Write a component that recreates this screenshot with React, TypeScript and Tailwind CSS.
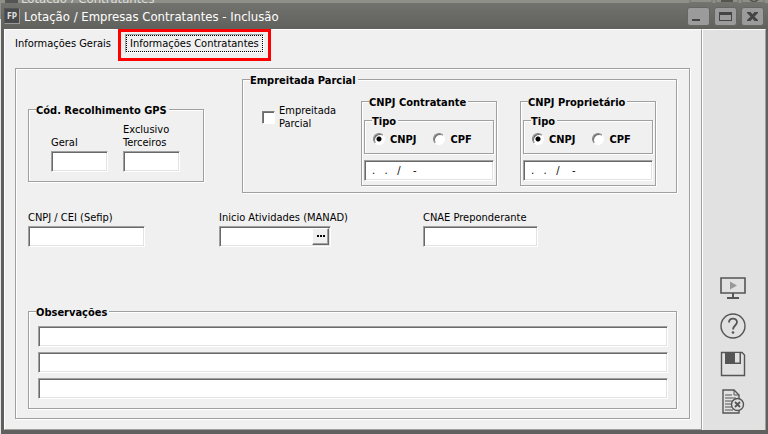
import type { ReactNode } from 'react';

const FIELD =
  'h-[21px] rounded-none border border-t-[#a0a0a0] border-l-[#a0a0a0] border-r-white border-b-white bg-white shadow-[inset_1px_1px_0_#696969,inset_-1px_-1px_0_#e3e3e3] outline-none';

type BoxProps = { title: string; className?: string; children: ReactNode };

function GroupBox({ title, className = '', children }: BoxProps) {
  return (
    <fieldset
      className={`min-w-0 border border-[#a0a0a0] shadow-[1px_1px_0_#fff,inset_1px_1px_0_#fff] ${className}`}
    >
      <legend className="ml-[7px] bg-[#f0f0f0] pt-[4px] pr-[2px] font-bold leading-[12px]">{title}</legend>
      {children}
    </fieldset>
  );
}

type FieldProps = { id: string; label: ReactNode; className: string };

function LabeledField({ id, label, className }: FieldProps) {
  return (
    <div className="flex flex-col justify-end gap-[2px]">
      <label htmlFor={id}>{label}</label>
      <input id={id} type="text" className={`${FIELD} px-1 ${className}`} />
    </div>
  );
}

const RADIO =
  'size-3 appearance-none rounded-full border border-t-[#808080] border-l-[#808080] border-r-white border-b-white bg-white shadow-[inset_1px_1px_0_#696969] checked:bg-[radial-gradient(circle,#000_2px,#fff_3px)]';

function DocumentBox({ title, name }: { title: string; name: string }) {
  return (
    <GroupBox title={title} className="w-[136px]">
      <div className="px-[2px] pt-[3px] pb-[4px]">
        <GroupBox title="Tipo">
          <div className="flex h-[22px] items-center gap-[17px] px-2 font-bold">
            <label className="flex items-center gap-[5px]">
              <input type="radio" name={name} defaultChecked className={RADIO} />
              CNPJ
            </label>
            <label className="flex items-center gap-[5px]">
              <input type="radio" name={name} className={RADIO} />
              CPF
            </label>
          </div>
          <div className="h-[3px]" />
        </GroupBox>
        <input
          type="text"
          aria-label={title}
          defaultValue=".   .   /    -"
          className={`${FIELD} mt-[6px] w-full px-[7px]`}
        />
      </div>
    </GroupBox>
  );
}

const WINDOW_BUTTON =
  'flex h-[19px] w-[23px] items-center justify-center rounded-[3px] border border-[#666763] bg-[#9b9b9b] text-[#444]';

function TitleBar() {
  return (
    <header className="flex h-[26px] shrink-0 items-center bg-linear-to-b from-[#72736f] to-[#60615d] pr-1 pl-[3px]">
      <span className="flex size-4 items-center justify-center border border-t-[#555] border-l-[#555] border-r-[#999] border-b-[#999] bg-[#48494a] text-[8px] font-bold text-[#ddd]">
        FP
      </span>
      <h1 className="ml-1 flex-1 text-[13px] text-white">Lotação / Empresas Contratantes - Inclusão</h1>
      <div className="flex gap-1">
        <button aria-label="Minimizar" className={WINDOW_BUTTON}>
          <svg width="17" height="15" viewBox="0 0 17 15">
            <path d="M2 10h8v2H2z" fill="currentColor" />
          </svg>
        </button>
        <button aria-label="Maximizar" className={WINDOW_BUTTON}>
          <svg width="13" height="9" viewBox="0 0 13 9">
            <path d="M0 0h13v9H0zM1 3v5h11V3z" fill="currentColor" fillRule="evenodd" />
          </svg>
        </button>
        <button aria-label="Fechar" className={WINDOW_BUTTON}>
          <svg width="11" height="9" viewBox="0 0 11 9">
            <path
              d="M0 0h3.500l2 2.200L7.500 0H11v1L7.500 4.500 11 8v1H7.500l-2-2.200L3.500 9H0V8l3.500-3.500L0 1z"
              fill="currentColor"
            />
          </svg>
        </button>
      </div>
    </header>
  );
}

function SideTools() {
  return (
    <aside className="flex w-[64px] shrink-0 flex-col items-center justify-end gap-3 border-t border-r border-l border-t-white border-r-[#a0a0a0] border-l-white bg-[#e1e1e1] pr-[2px] pb-[15px] text-[#555]">
      <button aria-label="Apresentação">
        <svg width="26" height="26" viewBox="0 0 26 26" fill="none" stroke="currentColor">
          <path d="M1 3h24v15H1z" strokeWidth="1.6" />
          <path d="M10 6.500l7 4-7 4z" fill="#999" stroke="none" />
          <path d="M13 18v4M7 23h12" strokeWidth="2" />
        </svg>
      </button>
      <button aria-label="Ajuda">
        <svg width="26" height="26" viewBox="0 0 26 26" fill="none" stroke="currentColor">
          <circle cx="13" cy="13" r="12" strokeWidth="1.4" />
          <path d="M9 9.500c0-5 8-5 8-.5 0 3.500-4 3.500-4 7.500" strokeWidth="1.800" />
          <circle cx="13" cy="19.500" r="1.300" fill="currentColor" stroke="none" />
        </svg>
      </button>
      <button aria-label="Salvar">
        <svg width="26" height="26" viewBox="0 0 26 26" fill="none" stroke="currentColor">
          <path d="M1.500 1.500h20.500l2.500 2.500v20.500h-23z" strokeWidth="1.400" />
          <path d="M5 1h16v12H5z" fill="currentColor" stroke="none" />
          <path d="M15 2h4.500v9.500H15z" fill="#e1e1e1" stroke="none" />
        </svg>
      </button>
      <button aria-label="Cancelar">
        <svg width="26" height="26" viewBox="0 0 26 26" fill="none" stroke="currentColor">
          <path d="M3 1h11l5 5v18H3z" strokeWidth="1.400" />
          <path d="M14 1v5h5M5 6h7M5 9h11M5 12h9M5 15h7M5 18h7M5 21h8" />
          <circle cx="17.500" cy="15.500" r="6" fill="#e1e1e1" strokeWidth="1.400" />
          <path d="M15 13l5 5M20 13l-5 5" strokeWidth="1.800" />
        </svg>
      </button>
    </aside>
  );
}

export default function App() {
  return (
    <div className="flex min-h-screen flex-col bg-[linear-gradient(#8e8f86_19px,#e6e6e6_19px)] font-['DejaVu_Sans_Condensed','DejaVu_Sans',sans-serif] text-[11px] leading-[13px] text-black">
      {/* bottom edge of the window behind this one */}
      <div className="flex h-[3px] items-end overflow-hidden bg-[#8e8f86] pr-[3px] pl-[5px] text-[13px] leading-[8px] text-[#ddd]">
        <span className="h-[3px] w-[13px] bg-[#555]" />
        <span className="ml-[3px] flex-1">Lotação / Contratantes</span>
        <svg width="77" height="3" viewBox="0 0 77 3" fill="none">
          <path d="M2 2.500h22M28 2.500h22M54 2.500h22M2 0v3M24 0v3M28 0v3M50 0v3M54 0v3M76 0v3" stroke="#73746e" />
          <path d="M33 0h12v2H33zM61 0h3l2 1 2-1h3l-3 2h-4z" fill="#55564f" />
        </svg>
      </div>
      <div className="ml-px flex flex-1 flex-col bg-[#60615f]">
        <TitleBar />
        <div className="mr-[2px] mb-[4px] ml-[3px] flex flex-1">
          <main className="flex flex-1 flex-col border border-t-white border-r-[#a0a0a0] border-b-[#a0a0a0] border-l-white bg-[#f0f0f0] pr-[11px] pb-[10px] pl-[10px]">
            <nav className="flex h-[38px] items-start">
              <button className="mt-[7px] w-[103px] text-left">Informações Gerais</button>
              <div className="-mt-px border-3 border-[#f00] px-1 pt-[2px] pb-[5px]">
                <button className="border border-t-[#a0a0a0] border-r-white border-b-white border-l-[#a0a0a0] px-[4px] py-[2px] outline-1 -outline-offset-2 outline-dotted">
                  Informações Contratantes
                </button>
              </div>
            </nav>

            <section className="flex flex-1 flex-col border border-[#a0a0a0] px-3 pt-[2px] pb-[9px] shadow-[1px_1px_0_#fff,inset_1px_1px_0_#fff]">
              <div className="flex items-start gap-[38px]">
                <GroupBox title="Cód. Recolhimento GPS" className="mt-[30px] w-44">
                  <div className="flex gap-[15px] pt-[6px] pb-[9px] pl-[22px]">
                    <LabeledField id="geral" label="Geral" className="w-[57px]" />
                    <LabeledField
                      id="exclusivo"
                      label={<>Exclusivo<br />Terceiros</>}
                      className="w-[57px]"
                    />
                  </div>
                </GroupBox>
                <GroupBox title="Empreitada Parcial" className="flex-1">
                  <div className="flex items-start justify-between pt-[6px] pr-5 pb-[6px] pl-[19px]">
                    <label className="mt-[11px] flex items-center gap-[4px]">
                      <input
                        type="checkbox"
                        className="size-[13px] appearance-none border border-t-[#808080] border-l-[#808080] border-r-white border-b-white bg-white shadow-[inset_1px_1px_0_#696969]"
                      />
                      <span>Empreitada<br />Parcial</span>
                    </label>
                    <div className="flex gap-[23px]">
                      <DocumentBox title="CNPJ Contratante" name="contratante" />
                      <DocumentBox title="CNPJ Proprietário" name="proprietario" />
                    </div>
                  </div>
                </GroupBox>
              </div>

              <div className="mt-[18px] grid grid-cols-[191px_204px_1fr]">
                <LabeledField id="sefip" label="CNPJ / CEI (Sefip)" className="w-[117px]" />
                <div className="flex flex-col gap-[2px]">
                  <label htmlFor="inicio">Inicio Atividades (MANAD)</label>
                  <div className={`${FIELD} flex w-[112px] p-[1px]`}>
                    <input id="inicio" type="text" className="min-w-0 flex-1 px-1 outline-none" />
                    <button
                      aria-label="Escolher data"
                      className="flex w-[17px] items-center justify-center border border-t-white border-l-white border-r-[#696969] border-b-[#696969] bg-[#f0f0f0] shadow-[inset_-1px_-1px_0_#a0a0a0]"
                    >
                      <svg width="8" height="4" viewBox="0 0 8 4">
                        <path d="M0 0h2v2H0zM3 0h2v2H3zM6 0h2v2H6z" />
                      </svg>
                    </button>
                  </div>
                </div>
                <LabeledField id="cnae" label="CNAE Preponderante" className="w-[115px]" />
              </div>

              <GroupBox title="Observações" className="mt-auto">
                <div className="flex flex-col gap-[5px] pt-[7px] pr-2 pb-[9px] pl-[9px]">
                  {[1, 2, 3].map(n => (
                    <input key={n} type="text" aria-label={`Observação ${n}`} className={`${FIELD} w-full px-1`} />
                  ))}
                </div>
              </GroupBox>
            </section>
          </main>
          <SideTools />
        </div>
      </div>
    </div>
  );
}
